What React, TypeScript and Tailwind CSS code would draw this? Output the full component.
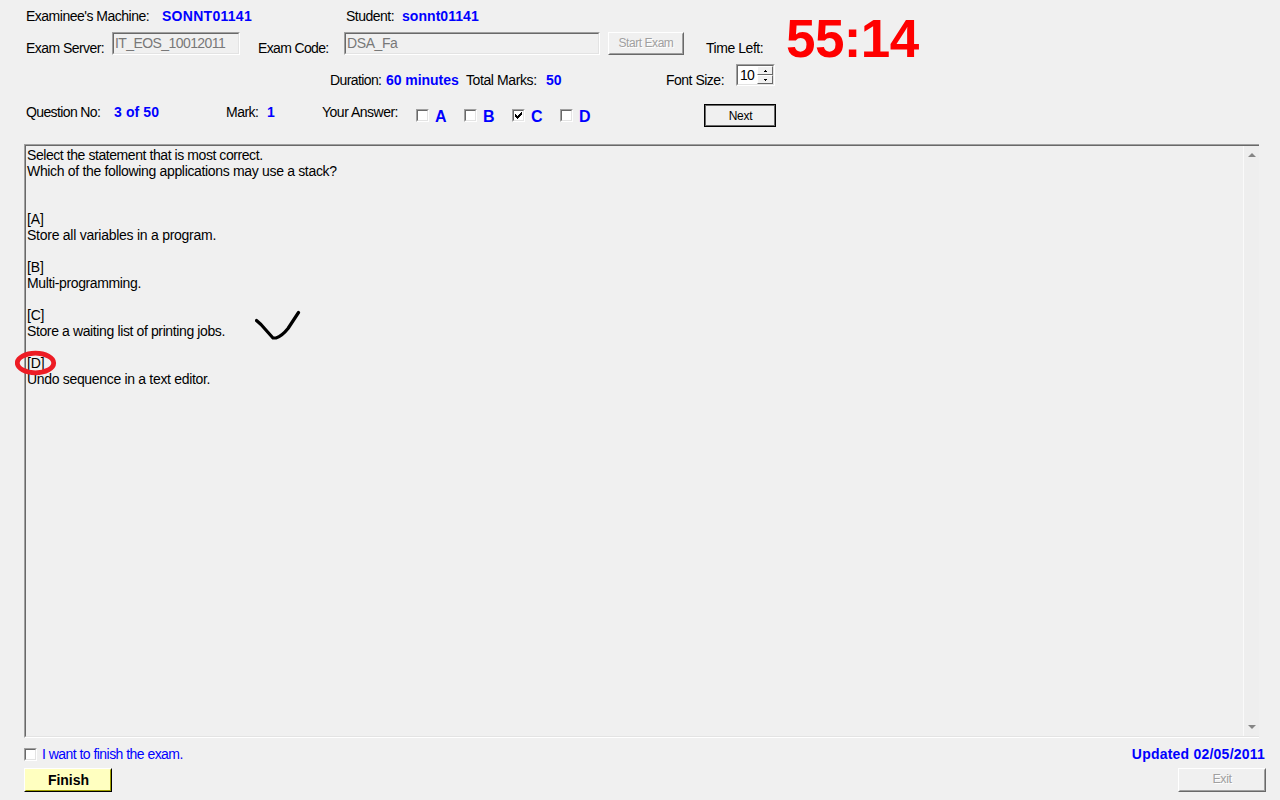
import type { ReactNode } from "react";
import clsx from "clsx";

const sunken =
  "border border-t-[#a0a0a0] border-l-[#a0a0a0] border-r-white border-b-white";
const sunkenInner =
  "border border-t-[#696969] border-l-[#696969] border-r-[#e3e3e3] border-b-[#e3e3e3]";

function Value({ className, children }: { className?: string; children: ReactNode }) {
  return <span className={clsx("shrink-0 font-bold text-[#0000ff]", className)}>{children}</span>;
}

function Label({ className, children }: { className?: string; children: ReactNode }) {
  return <span className={clsx("shrink-0", className)}>{children}</span>;
}

function Field({ className, textClass, value }: { className: string; textClass: string; value: string }) {
  return (
    <div className={clsx("h-[23px] shrink-0 self-start", sunken, className)}>
      <div className={clsx("flex h-full items-center pb-[2px] pl-px", sunkenInner)}>
        <span className={clsx("leading-4 text-[#787878]", textClass)}>{value}</span>
      </div>
    </div>
  );
}

function CheckBox({ checked = false }: { checked?: boolean }) {
  return (
    <span role="checkbox" aria-checked={checked} className={clsx("block h-[13px] w-[13px] shrink-0", sunken)}>
      <span className={clsx("block h-full w-full bg-white", sunkenInner)}>
        {checked && (
          <svg className="block h-[9px] w-[9px]" viewBox="0 0 9 9" shapeRendering="crispEdges">
            <path d="M1 3h1v3h-1zM2 4h1v3h-1zM3 5h1v3h-1zM4 4h1v3h-1zM5 3h1v3h-1zM6 2h1v3h-1zM7 1h1v3h-1z" fill="#000" />
          </svg>
        )}
      </span>
    </span>
  );
}

function DisabledButton({ className, textClass, children }: { className: string; textClass: string; children: ReactNode }) {
  return (
    <button
      disabled
      className={clsx("shrink-0 border border-t-white border-l-white border-r-[#696969] border-b-[#696969]", className)}
    >
      <span className="flex h-full items-center justify-center border border-t-[#f0f0f0] border-l-[#f0f0f0] border-r-[#a0a0a0] border-b-[#a0a0a0] pb-px">
        <span className={clsx("leading-none text-[#a0a0a0] [text-shadow:1px_1px_0_#fff]", textClass)}>{children}</span>
      </span>
    </button>
  );
}

function SpinButton({ up }: { up: boolean }) {
  return (
    <button className="flex min-h-0 flex-1 items-center justify-center border border-t-white border-l-white border-r-[#696969] border-b-[#696969] bg-[#f0f0f0]">
      <svg width="3" height="2" viewBox="0 0 3 2" shapeRendering="crispEdges">
        <path d={up ? "M1 0h1v1h1v1h-3v-1h1z" : "M0 0h3v1h-1v1h-1v-1h-1z"} />
      </svg>
    </button>
  );
}

function Choice({ letter, checked }: { letter: string; checked?: boolean }) {
  return (
    <label className="flex w-12 shrink-0 items-center">
      <CheckBox checked={checked} />
      <span className="ml-[6px] -mb-px pt-px text-[16px] leading-4 font-bold text-[#0000ff]">{letter}</span>
    </label>
  );
}

const questionLines: [string, string][] = [
  ["Select the statement that is most correct.", "tracking-[-0.43px]"],
  ["Which of the following applications may use a stack?", "tracking-[-0.33px]"],
  ["", ""],
  ["", ""],
  ["[A]", "tracking-[-0.1px]"],
  ["Store all variables in a program.", "tracking-[-0.26px]"],
  ["", ""],
  ["[B]", "tracking-[-0.1px]"],
  ["Multi-programming.", "tracking-[-0.37px]"],
  ["", ""],
  ["[C]", "tracking-[-0.2px]"],
  ["Store a waiting list of printing jobs.", "tracking-[-0.38px]"],
  ["", ""],
  ["[D]", "tracking-[-0.1px]"],
  ["Undo sequence in a text editor.", "tracking-[-0.32px]"],
];

export default function App() {
  return (
    <div className="flex h-[800px] w-[1280px] flex-col overflow-hidden bg-[#f0f0f0] font-['Liberation_Sans',Arial,sans-serif] text-[14px] leading-4 whitespace-nowrap text-black">
      <header className="flex h-36 shrink-0 flex-col pl-[26px]">
        <div className="flex h-8 items-center">
          <Label className="w-[136px] tracking-[-0.5px]">Examinee's Machine:</Label>
          <Value className="w-[184px] tracking-[0.28px]">SONNT01141</Value>
          <Label className="w-[56px] tracking-[-0.5px]">Student:</Label>
          <Value className="tracking-[0.05px]">sonnt01141</Value>
        </div>
        <div className="flex h-8 items-center">
          <Label className="w-[86px] tracking-[-0.56px]">Exam Server:</Label>
          <Field className="w-32" textClass="tracking-[-0.58px]" value="IT_EOS_10012011" />
          <Label className="ml-[18px] w-[86px] tracking-[-0.65px]">Exam Code:</Label>
          <Field className="w-64" textClass="tracking-[-0.4px]" value="DSA_Fa" />
          <DisabledButton className="ml-2 h-[23px] w-[76px] self-start" textClass="text-[12px] tracking-[-0.45px]">
            Start Exam
          </DisabledButton>
          <Label className="ml-[22px] w-[80px] tracking-[-0.45px]">Time Left:</Label>
          <span className="-mt-[19px] text-[53px] leading-[56px] font-bold tracking-[-0.6px] text-[#ff0000]">55:14</span>
        </div>
        <div className="flex h-8 items-center">
          <Label className="ml-[304px] w-[56px] tracking-[-0.6px]">Duration:</Label>
          <Value className="w-[80px] tracking-[-0.05px]">60 minutes</Value>
          <Label className="w-[80px] tracking-[-0.4px]">Total Marks:</Label>
          <Value className="w-[120px]">50</Value>
          <Label className="w-[70px] tracking-[-0.5px]">Font Size:</Label>
          <div className={clsx("h-[22px] w-[39px] self-start", sunken)}>
            <div className={clsx("flex h-full bg-white", sunkenInner)}>
              <span className="flex w-[19px] items-center pl-[2px] tracking-[-0.8px]">10</span>
              <div className="flex min-w-0 flex-1 flex-col">
                <SpinButton up />
                <SpinButton up={false} />
              </div>
            </div>
          </div>
        </div>
        <div className="flex h-8 items-center">
          <Label className="w-[88px] tracking-[-0.62px]">Question No:</Label>
          <Value className="w-[112px] tracking-[0.1px]">3 of 50</Value>
          <Label className="w-[41px] tracking-[-0.5px]">Mark:</Label>
          <Value className="w-[55px]">1</Value>
          <Label className="w-[94px] tracking-[-0.5px]">Your Answer:</Label>
          <div className="mt-[7px] flex w-[288px]">
            <Choice letter="A" />
            <Choice letter="B" />
            <Choice letter="C" checked />
            <Choice letter="D" />
          </div>
          <button className="mt-[7px] h-[23px] w-[72px] border border-black">
            <span className="flex h-full items-center justify-center border border-[#696969] pl-px text-[12px] tracking-[-0.3px]">
              Next
            </span>
          </button>
        </div>
      </header>

      <main className="relative ml-6 flex h-[594px] w-[1235px] shrink-0 border-t border-b border-l border-t-[#a0a0a0] border-b-white border-l-[#a0a0a0]">
        <div className="flex flex-1 border-t border-b border-l border-t-[#696969] border-b-[#e3e3e3] border-l-[#696969]">
          <div className="flex-1 pt-px pl-px">
            {questionLines.map(([text, tracking], i) => (
              <p key={i} className={clsx("h-4", tracking)}>
                {text}
              </p>
            ))}
          </div>
          <div className="flex w-4 flex-col items-center justify-between border-l border-[#fafafa] bg-[#eeeeee] pt-[7px] pb-[6px]">
            <svg width="8" height="5" viewBox="0 0 8 5">
              <path d="M4 0L8 4H0z" fill="#858585" />
            </svg>
            <svg width="8" height="5" viewBox="0 0 8 5">
              <path d="M0 0H8L4 4z" fill="#858585" />
            </svg>
          </div>
        </div>
        <svg className="absolute top-[165px] left-[230px]" width="47" height="32" viewBox="0 0 47 32">
          <path d="M1.5 10.5L6 14.5L18 28H21Q27 26 33 18.5L43.5 2.5" fill="none" stroke="#000" strokeWidth="3.2" strokeLinecap="round" strokeLinejoin="round" />
        </svg>
        <svg className="absolute top-[205px] left-[-10px]" width="42" height="26" viewBox="0 0 42 26">
          <ellipse cx="20.5" cy="13" rx="18.2" ry="9.8" fill="none" stroke="#ed1c24" strokeWidth="4.8" />
        </svg>
      </main>

      <footer className="flex flex-1 justify-between pr-[14px] pl-6">
        <div className="flex flex-col">
          <label className="mt-2 flex h-4 items-center">
            <CheckBox />
            <span className="ml-[5px] tracking-[-0.54px] text-[#0000ff]">I want to finish the exam.</span>
          </label>
          <button className="mt-[6px] h-6 w-[88px] border border-t-white border-l-white border-r-black border-b-black bg-[#ffffc0]">
            <span className="flex h-full items-center justify-center border border-t-[#ffffc0] border-l-[#ffffc0] border-r-[#a0a000] border-b-[#a0a000] pl-px text-[14px] font-bold">
              Finish
            </span>
          </button>
        </div>
        <div className="flex flex-col items-end">
          <Value className="mt-2 mr-px h-4 tracking-[0.22px]">Updated 02/05/2011</Value>
          <DisabledButton className="mt-[6px] h-6 w-[88px]" textClass="text-[12.5px] tracking-[-0.4px]">
            Exit
          </DisabledButton>
        </div>
      </footer>
    </div>
  );
}
